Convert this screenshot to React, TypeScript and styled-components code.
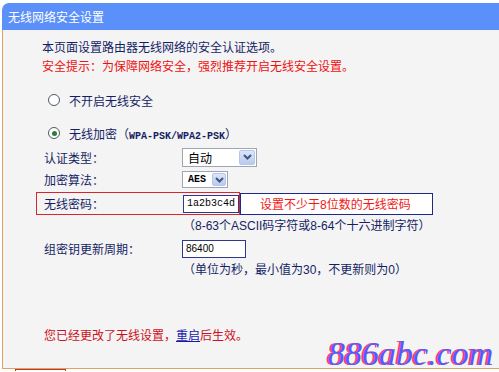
import styled, { createGlobalStyle } from "styled-components";

const GlobalStyle = createGlobalStyle`
  html, body {
    margin: 0;
    padding: 0;
    background: #fff;
    overflow: hidden;
  }
  body {
    font-family: "Liberation Sans", "Noto Sans CJK SC", sans-serif;
    font-size: 12px;
  }
`;

const Frame = styled.div`
  position: relative;
  width: 497px;
  margin: 3px 0 0 2px;
`;

const Header = styled.div`
  height: 27px;
  display: flex;
  align-items: center;
  padding-left: 6px;
  background: #5b8ffa;
  border-top-left-radius: 7px;
  color: #fff;
  font-size: 12px;
`;

const Content = styled.div`
  box-sizing: border-box;
  height: 339px;
  padding: 9px 0 0 39px;
  background: #f4f4f4;
  border-left: 1px solid #e2a15e;
  border-bottom: 1px solid #e2a15e;
`;

const Line = styled.div<{ $red?: boolean }>`
  line-height: 19px;
  color: ${(p) => (p.$red ? "#ee1111" : "#141e64")};
`;

const RadioRow = styled.label`
  display: flex;
  align-items: center;
  gap: 9px;
  height: 18px;
  margin: 14px 0 0 6px;
  color: #141e64;
  & + & {
    margin-top: 15px;
  }
`;

const RadioDot = styled.span<{ $checked?: boolean }>`
  box-sizing: border-box;
  width: 12px;
  height: 12px;
  border: 1px solid #4c5a6e;
  border-radius: 50%;
  background: #fff;
  display: flex;
  align-items: center;
  justify-content: center;
  &::after {
    content: "";
    display: ${(p) => (p.$checked ? "block" : "none")};
    width: 5px;
    height: 5px;
    border-radius: 50%;
    background: #2e7d32;
  }
`;

const Mono = styled.span<{ $bold?: boolean }>`
  font-family: "Liberation Mono", monospace;
  font-size: 10px;
  font-weight: ${(p) => (p.$bold ? "bold" : "normal")};
`;

const Form = styled.div`
  margin: 4px 0 0 2px;
`;

const FieldRow = styled.div<{ $h: number }>`
  display: flex;
  align-items: center;
  height: ${(p) => p.$h}px;
  color: #141e64;
`;

const Label = styled.div<{ $w?: number }>`
  width: ${(p) => p.$w ?? 138}px;
  flex: none;
`;

const Hint = styled.div<{ $h: number }>`
  height: ${(p) => p.$h}px;
  line-height: ${(p) => p.$h}px;
  padding-left: 139px;
  color: #141e64;
`;

const SelectBox = styled.div<{ $w: number; $h: number }>`
  box-sizing: border-box;
  width: ${(p) => p.$w}px;
  height: ${(p) => p.$h}px;
  display: flex;
  align-items: center;
  justify-content: space-between;
  padding: 1px 1px 1px 5px;
  background: #fff;
  border: 1px solid #9ea6b4;
  color: #000;
`;

const SelectButton = styled.span<{ $w: number }>`
  box-sizing: border-box;
  width: ${(p) => p.$w}px;
  height: 100%;
  display: flex;
  align-items: center;
  justify-content: center;
  border: 1px solid #b6c7ec;
  border-radius: 2px;
  background: linear-gradient(#dce6fb, #b9caee);
`;

const TextInput = styled.div<{ $w: number }>`
  box-sizing: border-box;
  width: ${(p) => p.$w}px;
  height: 18px;
  display: flex;
  align-items: center;
  padding-left: 3px;
  background: #fff;
  border: 1px solid #30388a;
  color: #000;
`;

const Digits = styled.span`
  font-family: "Liberation Sans", sans-serif;
  font-size: 10px;
`;

const RedFrame = styled.div`
  box-sizing: border-box;
  display: flex;
  align-items: center;
  width: 204px;
  height: 23px;
  margin-left: -8px;
  padding-left: 7px;
  border: 1px solid #d8262c;
`;

const Callout = styled.div`
  box-sizing: border-box;
  width: 193px;
  height: 22px;
  display: flex;
  align-items: center;
  padding-left: 19px;
  background: #fff;
  border: 1px solid #1e2a8a;
  color: #f01818;
`;

const Notice = styled.div`
  margin: 46px 0 0 2px;
  line-height: 18px;
  color: #cc1122;
  a {
    color: #1a1aaa;
    text-decoration: underline;
  }
`;

const Watermark = styled.div`
  position: absolute;
  left: 326px;
  bottom: -2px;
  font-family: "Liberation Serif", serif;
  font-style: italic;
  font-size: 34px;
  line-height: 1;
  color: #4f5cff;
  text-shadow: -2px 0 0 #ff3d6a;
`;

const Stub = styled.div`
  box-sizing: border-box;
  width: 51px;
  height: 2px;
  margin: 0 0 0 15px;
  border: 1px solid #c0392b;
  border-bottom: none;
`;

function Chevron() {
  return (
    <svg width="9" height="6" viewBox="0 0 9 6">
      <path d="M1 1 L4.5 4.5 L8 1" fill="none" stroke="#42557e" strokeWidth="2" />
    </svg>
  );
}

export default function App() {
  return (
    <>
      <GlobalStyle />
      <Frame>
        <Header>无线网络安全设置</Header>
        <Content>
          <Line>本页面设置路由器无线网络的安全认证选项。</Line>
          <Line $red>安全提示：为保障网络安全，强烈推荐开启无线安全设置。</Line>

          <RadioRow>
            <RadioDot />
            不开启无线安全
          </RadioRow>
          <RadioRow>
            <RadioDot $checked />
            <span>
              无线加密（<Mono $bold>WPA-PSK/WPA2-PSK</Mono>）
            </span>
          </RadioRow>

          <Form>
            <FieldRow $h={22}>
              <Label>认证类型：</Label>
              <SelectBox $w={75} $h={19}>
                自动
                <SelectButton $w={16}>
                  <Chevron />
                </SelectButton>
              </SelectBox>
            </FieldRow>
            <FieldRow $h={23}>
              <Label>加密算法：</Label>
              <SelectBox $w={46} $h={17}>
                <Mono $bold>AES</Mono>
                <SelectButton $w={14}>
                  <Chevron />
                </SelectButton>
              </SelectBox>
            </FieldRow>
            <FieldRow $h={25}>
              <RedFrame>
                <Label $w={139}>无线密码：</Label>
                <TextInput $w={56}>
                  <Mono>1a2b3c4d</Mono>
                </TextInput>
              </RedFrame>
              <Callout>设置不少于8位数的无线密码</Callout>
            </FieldRow>
            <Hint $h={21}>（8-63个ASCII码字符或8-64个十六进制字符）</Hint>
            <FieldRow $h={23}>
              <Label>组密钥更新周期：</Label>
              <TextInput $w={64}>
                <Digits>86400</Digits>
              </TextInput>
            </FieldRow>
            <Hint $h={21}>（单位为秒，最小值为30，不更新则为0）</Hint>
          </Form>

          <Notice>
            您已经更改了无线设置，<a href="#">重启</a>后生效。
          </Notice>
        </Content>
        <Watermark>886abc.com</Watermark>
      </Frame>
      <Stub />
    </>
  );
}
